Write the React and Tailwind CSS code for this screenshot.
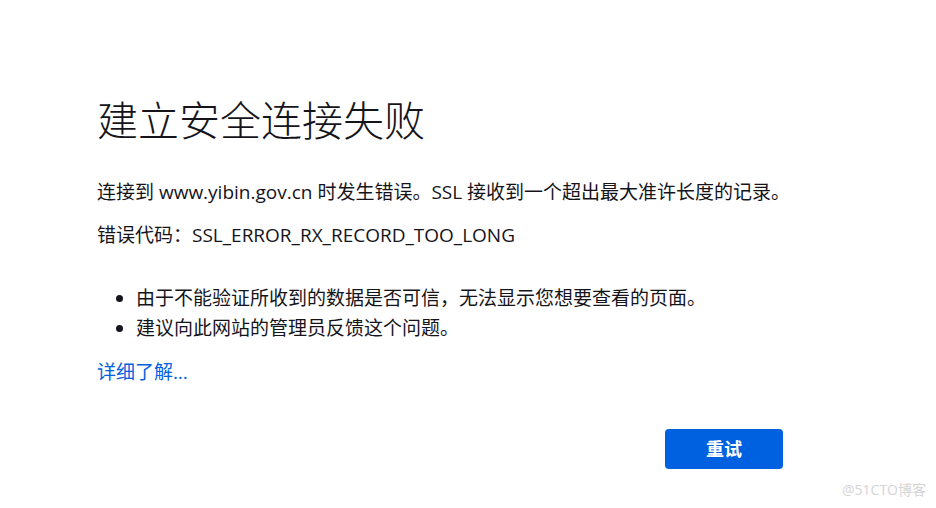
export default function App() {
  const font = { fontFamily: '"Open Sans", "Noto Sans CJK SC", sans-serif' };
  return (
    <div className="relative w-[936px] h-[508px] bg-white text-[#15141a] overflow-hidden" style={font}>
      <div className="ml-[97px] w-[686px] pt-[96px]">
        <h1 className="text-[41px] leading-[48px] font-light">建立安全连接失败</h1>
        <p className="mt-[36px] text-[19px] leading-[24px] whitespace-nowrap">连接到 www.yibin.gov.cn 时发生错误。SSL 接收到一个超出最大准许长度的记录。</p>
        <p className="mt-[19px] text-[19px] leading-[24px]">错误代码：SSL_ERROR_RX_RECORD_TOO_LONG</p>
        <ul className="mt-[36px] list-disc pl-[39px] text-[19px] leading-[30px]">
          <li>由于不能验证所收到的数据是否可信，无法显示您想要查看的页面。</li>
          <li>建议向此网站的管理员反馈这个问题。</li>
        </ul>
        <a className="mt-[17px] block text-[19px] leading-[24px] text-[#0061e0]">详细了解…</a>
        <div className="mt-[45px] flex justify-end">
          <button className="w-[118px] h-[40px] rounded-[4px] bg-[#0061e0] text-white text-[18px] font-bold">重试</button>
        </div>
      </div>
      <div className="absolute right-[10px] bottom-[8px] text-[14px] text-[#d4d4d4]">@51CTO博客</div>
    </div>
  );
}
